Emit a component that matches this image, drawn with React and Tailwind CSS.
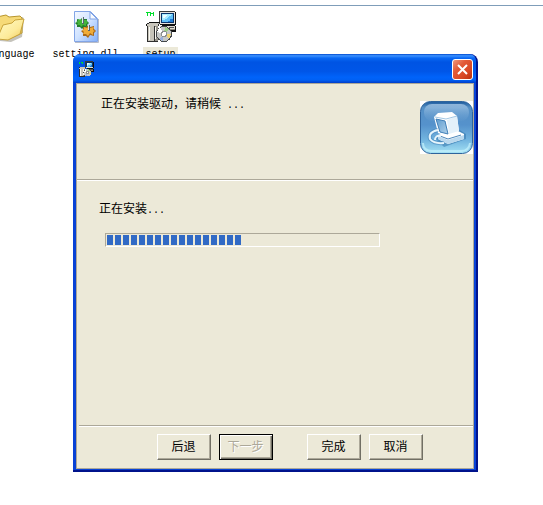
import React from "react";

const FOOTER_BUTTON =
    "w-[54px] h-[26px] pb-0.5 text-[12px] leading-none bg-[#ece9d8] text-black";
const RAISED =
    "border border-t-white border-l-white border-r-[#716f64] border-b-[#716f64] shadow-[inset_-1px_-1px_0_#aca899]";

function FolderIcon() {
    return (
        <svg width="32" height="32" viewBox="0 0 32 32" aria-hidden="true">
            <defs>
                <linearGradient id="folderFront" x1="0" y1="0" x2="1" y2="1">
                    <stop offset="0" stopColor="#fffbc8" />
                    <stop offset="0.6" stopColor="#fdeb9a" />
                    <stop offset="1" stopColor="#f0c858" />
                </linearGradient>
            </defs>
            <path d="M4 30 L4 6 L13 5 L16 7 L28 6 L29 9 L27 26 L16 31 Z" fill="#8c8878" opacity="0.5" />
            <path d="M3 27 L2 6 L11 4 L14 6 L25 5 L27 7 L27 22 L14 28 Z" fill="#f6da78" stroke="#b8962e" />
            <path d="M2 28 L8 14 L17 12 L20 9 L29 8 L25 23 L13 29 Z" fill="url(#folderFront)" stroke="#c9a43a" />
        </svg>
    );
}

function DllIcon() {
    return (
        <svg width="32" height="32" viewBox="0 0 32 32" aria-hidden="true">
            <defs>
                <linearGradient id="sheet" x1="0" y1="0" x2="1" y2="1">
                    <stop offset="0" stopColor="#f4f8ff" />
                    <stop offset="0.5" stopColor="#cfe2ff" />
                    <stop offset="1" stopColor="#84b0fa" />
                </linearGradient>
            </defs>
            <path d="M5 31.5 H28.5 V8" fill="none" stroke="#b9bdc8" />
            <path d="M4.5 0.5 H20.5 L27.5 7.5 V30.5 H4.5 Z" fill="url(#sheet)" stroke="#82a5e6" />
            <path d="M20 1 L20 8 L27 8 Z" fill="#f7faff" stroke="#82a5e6" />
            <path d="M5 12 L7 11 L7 8 L10 9 L12 7 L14 8 L17 8 L17 10 L19 12 L17 14 L17 17 L14 16 L12 18 L10 16 L7 16 L7 14 Z" fill="#237d2e" />
            <path d="M6 11 L8 10 L8 8 L11 9 L13 7 L14 9 L17 9 L17 11 L18 12 L16 13 L16 15 L13 14 L11 16 L10 14 L7 14 L8 12 Z" fill="#45b43d" />
            <path d="M11 20 L13 19 L13 16 L16 16 L18 14 L20 16 L24 15 L24 18 L26 20 L24 22 L24 25 L20 24 L18 27 L16 25 L13 25 L13 22 Z" fill="#a9691a" />
            <path d="M12 19 L14 18 L14 16 L17 17 L19 15 L20 17 L24 16 L23 19 L25 20 L23 21 L23 24 L20 22 L18 25 L16 23 L13 23 L14 21 Z" fill="#f0ac38" />
            <path d="M13 6 V13 M19 14 V20" stroke="#566570" strokeWidth="2" />
            <path d="M12.5 6 V12 M18.5 14 V19" stroke="#e0e9e9" />
        </svg>
    );
}

// the installer icon: monitor, software box and disc
function SetupIcon({ size }) {
    return (
        <svg width={size} height={size} viewBox="0 0 32 32" shapeRendering="crispEdges" aria-hidden="true">
            <path d="M1 1h4v1H1zM2 2h1v3H2zM5 1h1v4H5zM8 1h1v4H8zM6 2h1v1H6zM7 2h1v1H7z" fill="#00dd2b" />
            <path d="M15 1h16v13H15z" fill="#101010" />
            <path d="M14 0h16v13H14z" fill="#e4e2dc" />
            <path d="M14 0h16v1H14zM14 0h1v13h-1z" fill="#3a3a3a" />
            <path d="M16 2h13v10H16z" fill="#07336b" />
            <path d="M17 3h11v8H17z" fill="#5fc0f8" />
            <path d="M17 3h10v1h-1v1h-2v1h-1v1h-1v1h-2v1h-3z" fill="#a8ecff" />
            <path d="M18 4h4v1h-1v1h-1v1h-2z" fill="#effcff" />
            <path d="M25 8h3v3h-5v-1h2z" fill="#1f7ad6" />
            <path d="M17 14h13v1h1v6H15v-6h2z" fill="#111" />
            <path d="M15 15h15v4H15z" fill="#dedbd0" />
            <path d="M24 16h5v1h-5z" fill="#555" />
            <path d="M15 18h15v1H15z" fill="#8d8a80" />
            <path d="M2 12h12v3h-1v16H2z" fill="#303030" />
            <path d="M1 13h3v-2h11v1h-1v1h-1v2H1z" fill="#c9c6bc" />
            <path d="M4 11h11v1H4zM1 13h1v2H1z" fill="#111" />
            <path d="M3 15h6v15H3z" fill="#c7c4b9" />
            <path d="M10 15h3v15h-3z" fill="#96938a" />
            <path d="M4 16h1v13H4zM10 16h1v12h-1z" fill="#f9f8f2" />
            <circle cx="19" cy="23" r="8" fill="#44474a" />
            <circle cx="19" cy="23" r="7" fill="#c6c8c6" />
            <path d="M19 23 L12 21 L15 16 Z" fill="#ffffff" />
            <path d="M19 23 L20 16 L24 18 Z" fill="#9ccf86" />
            <path d="M19 23 L26 23 L24 28 Z" fill="#efd36d" />
            <path d="M19 23 L18 30 L14 28 Z" fill="#98b0dc" />
            <circle cx="19" cy="23" r="3" fill="#8b8f8f" />
            <circle cx="19" cy="23" r="2" fill="#fff" />
        </svg>
    );
}

function InstallerLogo() {
    return (
        <svg width="53" height="53" viewBox="0 0 53 53" aria-hidden="true">
            <defs>
                <linearGradient id="tile" x1="0" y1="0" x2="0" y2="1">
                    <stop offset="0" stopColor="#1d5a9c" />
                    <stop offset="0.12" stopColor="#5590c6" />
                    <stop offset="0.45" stopColor="#5592cc" />
                    <stop offset="0.75" stopColor="#74b6e0" />
                    <stop offset="1" stopColor="#a6e3f4" />
                </linearGradient>
                <linearGradient id="gloss" x1="0" y1="0" x2="0" y2="1">
                    <stop offset="0" stopColor="#b8d4ee" stopOpacity="0.7" />
                    <stop offset="1" stopColor="#77a9d6" stopOpacity="0.1" />
                </linearGradient>
                <linearGradient id="screen" x1="0" y1="0" x2="1" y2="1">
                    <stop offset="0" stopColor="#5f9ccf" />
                    <stop offset="1" stopColor="#b0d2eb" />
                </linearGradient>
            </defs>
            <path d="M0 0h53v53H0z" fill="#fff" />
            <rect x="0.5" y="0.5" width="52" height="52" rx="10" fill="url(#tile)" stroke="#2f649c" />
            <rect x="4" y="3" width="45" height="17" rx="8" fill="url(#gloss)" />
            <path d="M3 42 Q3 50 12 50 H41 Q49 50 50 42" fill="none" stroke="#c4f2fc" strokeWidth="2" opacity="0.7" />
            <path d="M14 36 L24 46 L46 38 L46 33 L38 28 Z" fill="#2d6fa8" opacity="0.5" />
            <path d="M18 34 L34 28 L44 33 L44 38 L28 43 L18 38 Z" fill="#fff" />
            <path d="M18 35 L28 39 L44 34 L44 38 L28 43 L18 38 Z" fill="#b9d8ee" />
            <path d="M20 35 L28 38 L41 34" fill="none" stroke="#4a86ba" />
            <path d="M14 16 L18 12 L32 11 L37 15 L39 30 L26 35 L18 32 Z" fill="#fff" />
            <path d="M16 18 L25 20 L28 33 L20 31 Z" fill="url(#screen)" stroke="#3f7fb8" />
            <path d="M27 19 L37 15 L39 30 L29 33 Z" fill="#e4f1fa" />
            <path d="M15 16 L26 18 L37 15" fill="none" stroke="#a3c7e4" />
            <path d="M18 29 Q8 31 10 38 Q14 43 24 42" fill="none" stroke="#3f7fb8" strokeWidth="4" opacity="0.5" />
            <path d="M18 29 Q8 31 10 38 Q14 43 24 42" fill="none" stroke="#e6f5fc" strokeWidth="2" />
            <path d="M15 39 Q15 34 21 35" fill="none" stroke="#e6f5fc" strokeWidth="2" />
        </svg>
    );
}

function DesktopItem({ label, selected, children }) {
    return (
        <div className="flex flex-col items-center">
            {children}
            <span
                className={
                    "mt-1 px-0.5 h-4 leading-4 font-['Liberation_Mono',monospace] text-[10px] " +
                    (selected ? "bg-[#ece9d8]" : "")
                }
            >
                {label}
            </span>
        </div>
    );
}

function Dots({ children }) {
    return <span className="font-['Liberation_Mono',monospace] text-[10px] whitespace-pre">{children}</span>;
}

function Divider() {
    return <div className="h-0.5 border-t border-t-[#aca899] border-b border-b-white" />;
}

function ProgressBar({ blocks }) {
    return (
        <div
            role="progressbar"
            aria-label="正在安装"
            className="flex gap-0.5 h-[14px] p-px border border-t-[#aca899] border-l-[#aca899] border-r-white border-b-white"
        >
            {Array.from({ length: blocks }, (_, i) => (
                <span key={i} className="w-1.5 h-full bg-[#316ac5]" />
            ))}
        </div>
    );
}

function TitleBar() {
    return (
        <header className="flex items-center justify-between h-[29px] pl-[5px] pr-[3px] pt-px rounded-t-[7px] bg-[linear-gradient(180deg,#0048cc_0%,#3c92ff_6%,#0868f4_14%,#0054e3_28%,#0056e8_60%,#0063fa_80%,#0060f4_90%,#003dc8_100%)]">
            <SetupIcon size={16} />
            <button
                type="button"
                aria-label="关闭"
                className="flex items-center justify-center size-[21px] rounded-[3px] border border-white bg-[linear-gradient(135deg,#f0997f_0%,#e25a38_35%,#d84724_70%,#b7300f_100%)]"
            >
                <svg width="13" height="13" viewBox="0 0 13 13" aria-hidden="true">
                    <path d="M2 2 L11 11 M11 2 L2 11" stroke="#fff" strokeWidth="2" />
                </svg>
            </button>
        </header>
    );
}

function SetupWindow() {
    return (
        <section className="absolute left-[73px] top-[54px] w-[405px] flex flex-col rounded-t-[8px] bg-[#0842d6] border-b-2 border-b-[#00138c] border-r-2 border-r-[#00138c]">
            <TitleBar />
            <div className="ml-[3px] mr-0.5 mb-px flex flex-col border border-[#aca899] bg-[#ece9d8]">
                <div className="flex justify-between h-[95px] pl-6 pt-[11px]">
                    <h1 className="leading-4">
                        正在安装驱动，请稍候<Dots> ...</Dots>
                    </h1>
                    <div className="pt-1.5">
                        <InstallerLogo />
                    </div>
                </div>
                <Divider />
                <main className="h-[244px] pl-[22px] pt-[19px]">
                    <p className="leading-4">
                        正在安装<Dots>...</Dots>
                    </p>
                    <div className="ml-1.5 mt-3.5 mr-[93px]">
                        <ProgressBar blocks={17} />
                    </div>
                </main>
                <div className="ml-0.5">
                    <Divider />
                </div>
                <footer className="flex justify-center h-[41px] pt-[7px] pl-[29px]">
                    <div className="flex gap-2 mr-[34px]">
                        <button type="button" className={FOOTER_BUTTON + " " + RAISED}>后退</button>
                        <button
                            type="button"
                            disabled
                            className={
                                FOOTER_BUTTON +
                                " border border-black shadow-[inset_1px_1px_0_#fff,inset_-1px_-1px_0_#716f64,inset_-2px_-2px_0_#aca899]"
                            }
                        >
                            <span className="text-[#aca899] [text-shadow:1px_1px_0_#fff]">下一步</span>
                        </button>
                    </div>
                    <div className="flex gap-2">
                        <button type="button" className={FOOTER_BUTTON + " " + RAISED}>完成</button>
                        <button type="button" className={FOOTER_BUTTON + " " + RAISED}>取消</button>
                    </div>
                </footer>
            </div>
        </section>
    );
}

export default function App() {
    return (
        <div className="relative min-h-screen overflow-hidden bg-white text-black text-[12px] font-['Noto_Sans_CJK_SC',sans-serif]">
            <div className="mt-[5px] border-t border-[#7f9db9]">
                <div className="grid grid-cols-[75px_75px_75px] -ml-[27px] pt-[5px]">
                    <DesktopItem label="language">
                        <FolderIcon />
                    </DesktopItem>
                    <DesktopItem label="setting.dll">
                        <DllIcon />
                    </DesktopItem>
                    <DesktopItem label="setup" selected>
                        <SetupIcon size={32} />
                    </DesktopItem>
                </div>
            </div>
            <SetupWindow />
        </div>
    );
}
